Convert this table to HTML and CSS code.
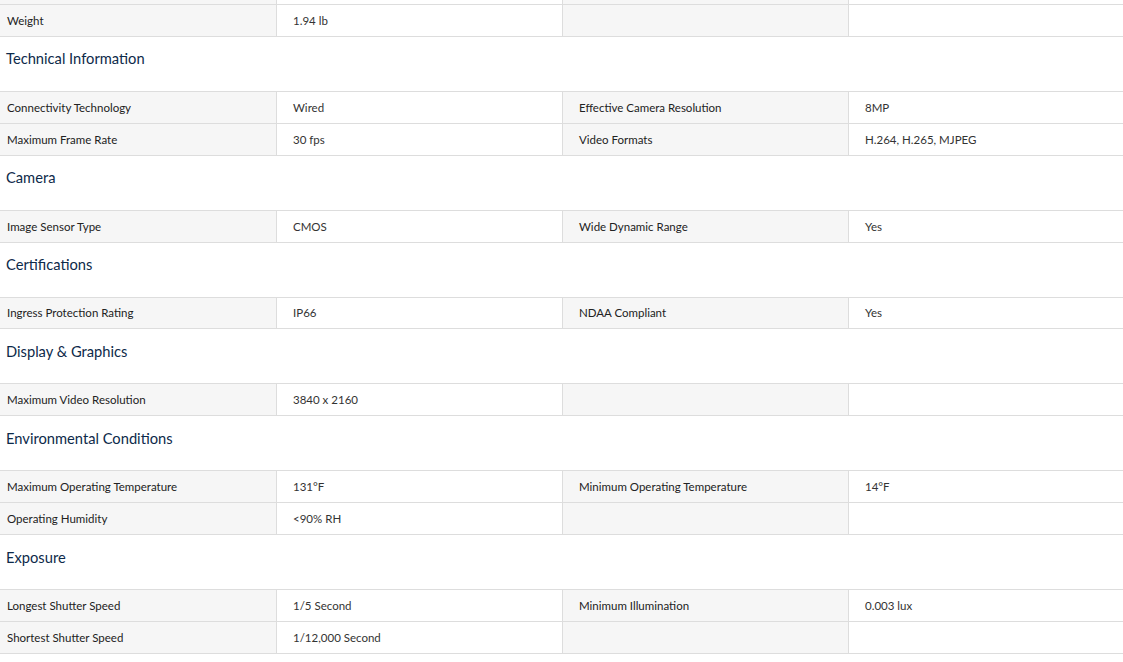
FILE: index.html
```html
<!DOCTYPE html>
<html lang="en">
<head>
<meta charset="utf-8">
<title>Specifications</title>
<link rel="stylesheet" href="styles.css">
</head>
<body>
<div class="specs">
  <div class="table stub">
    <div class="row stub-row"><div class="cell label"></div><div class="cell value"></div><div class="cell label"></div><div class="cell value"></div></div>
    <div class="row"><div class="cell label">Weight</div><div class="cell value">1.94 lb</div><div class="cell label"></div><div class="cell value"></div></div>
  </div>

  <h3 class="section-title">Technical Information</h3>
  <div class="table">
    <div class="row"><div class="cell label">Connectivity Technology</div><div class="cell value">Wired</div><div class="cell label">Effective Camera Resolution</div><div class="cell value">8MP</div></div>
    <div class="row"><div class="cell label">Maximum Frame Rate</div><div class="cell value">30 fps</div><div class="cell label">Video Formats</div><div class="cell value">H.264, H.265, MJPEG</div></div>
  </div>

  <h3 class="section-title">Camera</h3>
  <div class="table">
    <div class="row"><div class="cell label">Image Sensor Type</div><div class="cell value">CMOS</div><div class="cell label">Wide Dynamic Range</div><div class="cell value">Yes</div></div>
  </div>

  <h3 class="section-title">Certifications</h3>
  <div class="table">
    <div class="row"><div class="cell label">Ingress Protection Rating</div><div class="cell value">IP66</div><div class="cell label">NDAA Compliant</div><div class="cell value">Yes</div></div>
  </div>

  <h3 class="section-title">Display &amp; Graphics</h3>
  <div class="table">
    <div class="row"><div class="cell label">Maximum Video Resolution</div><div class="cell value">3840 x 2160</div><div class="cell label"></div><div class="cell value"></div></div>
  </div>

  <h3 class="section-title">Environmental Conditions</h3>
  <div class="table">
    <div class="row"><div class="cell label">Maximum Operating Temperature</div><div class="cell value">131°F</div><div class="cell label">Minimum Operating Temperature</div><div class="cell value">14°F</div></div>
    <div class="row"><div class="cell label">Operating Humidity</div><div class="cell value">&lt;90% RH</div><div class="cell label"></div><div class="cell value"></div></div>
  </div>

  <h3 class="section-title">Exposure</h3>
  <div class="table">
    <div class="row"><div class="cell label">Longest Shutter Speed</div><div class="cell value">1/5 Second</div><div class="cell label">Minimum Illumination</div><div class="cell value">0.003 lux</div></div>
    <div class="row"><div class="cell label">Shortest Shutter Speed</div><div class="cell value">1/12,000 Second</div><div class="cell label"></div><div class="cell value"></div></div>
  </div>
</div>
</body>
</html>
```

FILE: styles.css
```css
html, body {
  margin: 0;
  padding: 0;
  background: #ffffff;
}

body {
  font-family: Lato, "Open Sans", "Liberation Sans", sans-serif;
  color: #2b2b2b;
  overflow: hidden;
}

.specs {
  width: 1123px;
}

.section-title {
  margin: 0;
  padding: 11.5px 0 22.5px 6px;
  height: 20px;
  line-height: 20px;
  font-size: 14.7px;
  font-weight: 400;
  color: #0d2a4a;
}

.table {
  border-top: 1px solid #dddddd;
}

.table.stub {
  border-top: none;
}

.row {
  display: grid;
  grid-template-columns: 277px 286px 286px 1fr;
  height: 30.89px;
  border-bottom: 1px solid #dddddd;
}

.row.stub-row {
  height: 4px;
}

.cell {
  display: flex;
  align-items: center;
  padding-left: 16px;
  font-size: 11.5px;
  border-right: 1px solid #dddddd;
  white-space: nowrap;
  overflow: hidden;
}

.cell:first-child {
  padding-left: 7px;
}

.cell:last-child {
  border-right: none;
}

.cell.label {
  background: #f6f6f6;
  color: #222222;
}

.cell.value {
  background: #ffffff;
  color: #333333;
}
```
